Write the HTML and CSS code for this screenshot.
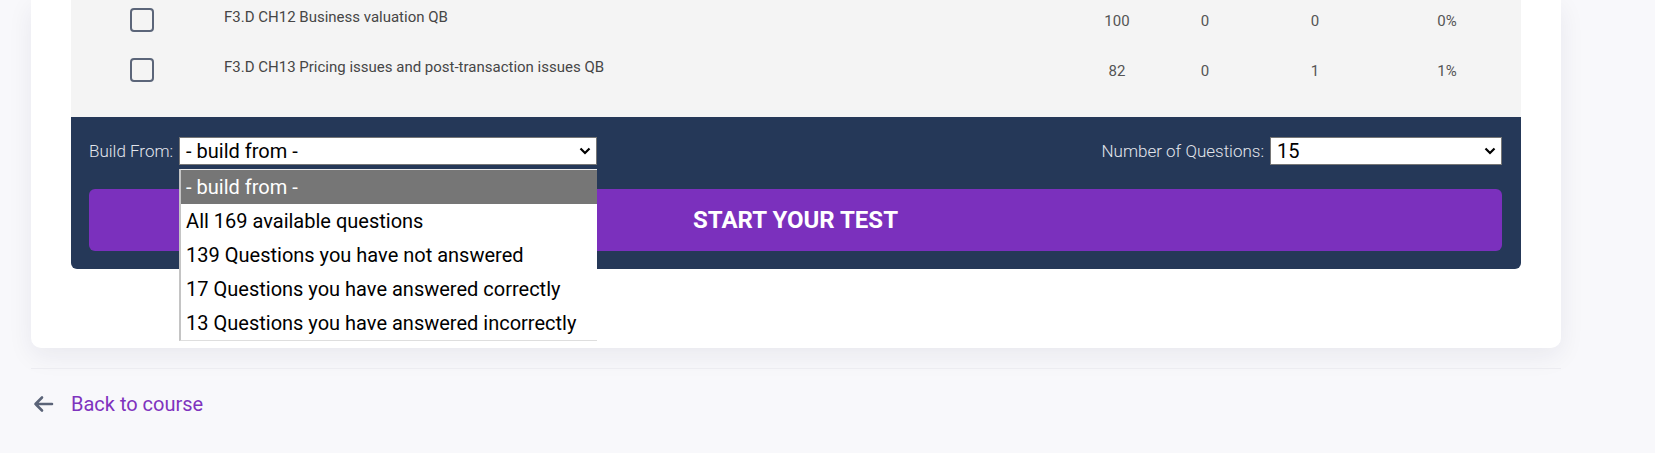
FILE: index.html
```html
<!DOCTYPE html>
<html lang="en">
<head>
<meta charset="utf-8">
<title>Build test</title>
<link rel="stylesheet" href="styles.css">
</head>
<body>
<div class="page">
  <div class="card">
    <div class="qtable">
      <div class="row">
        <span class="cb"></span>
        <span class="title">F3.D CH12 Business valuation QB</span>
        <span class="num">100</span>
        <span class="num">0</span>
        <span class="num">0</span>
        <span class="num">0%</span>
      </div>
      <div class="row">
        <span class="cb"></span>
        <span class="title">F3.D CH13 Pricing issues and post-transaction issues QB</span>
        <span class="num">82</span>
        <span class="num">0</span>
        <span class="num">1</span>
        <span class="num">1%</span>
      </div>
    </div>
    <div class="panel">
      <div class="controls">
        <div class="field">
          <span class="lbl">Build From:</span>
          <div class="select-wrap">
            <div class="select wide">
              <span>- build from -</span>
              <svg class="chev" width="12" height="8" viewBox="0 0 12 8"><path d="M1.5 1.5 L6 6 L10.5 1.5" fill="none" stroke="#000" stroke-width="2.2"/></svg>
            </div>
            <div class="dropdown">
              <div class="opt sel">- build from -</div>
              <div class="opt">All 169 available questions</div>
              <div class="opt">139 Questions you have not answered</div>
              <div class="opt">17 Questions you have answered correctly</div>
              <div class="opt">13 Questions you have answered incorrectly</div>
            </div>
          </div>
        </div>
        <div class="field">
          <span class="lbl">Number of Questions:</span>
          <div class="select-wrap">
            <div class="select narrow">
              <span>15</span>
              <svg class="chev" width="12" height="8" viewBox="0 0 12 8"><path d="M1.5 1.5 L6 6 L10.5 1.5" fill="none" stroke="#000" stroke-width="2.2"/></svg>
            </div>
          </div>
        </div>
      </div>
      <button class="start">START YOUR TEST</button>
    </div>
  </div>
  <div class="divider"></div>
  <a class="back" href="#">
    <svg width="24" height="24" viewBox="0 0 24 24"><path d="M21 12 H4.5 M11 5.5 L4.5 12 L11 18.5" fill="none" stroke="#5b6478" stroke-width="2.6" stroke-linecap="round" stroke-linejoin="round"/></svg>
    <span>Back to course</span>
  </a>
</div>
</body>
</html>
```
FILE: styles.css
```css
* { box-sizing: border-box; }

body {
  margin: 0;
  background: #f8f8fb;
  font-family: Roboto, "Liberation Sans", sans-serif;
}

.page {
  padding-left: 31px;
  width: 1561px;
}

.card {
  width: 1530px;
  background: #fff;
  border-radius: 0 0 10px 10px;
  box-shadow: 0 8px 26px rgba(30, 30, 70, 0.07);
  padding: 0 40px 79px;
}

.qtable {
  background: #f4f4f4;
  padding: 8px 0 9px;
}

.row {
  display: grid;
  grid-template-columns: 153px 846px 94px 82px 138px 126px;
  height: 50px;
  align-items: start;
}

.cb {
  width: 24px;
  height: 24px;
  border: 2px solid #5b6579;
  border-radius: 4px;
  margin-left: 59px;
}

.title {
  font-size: 15px;
  color: #464646;
}

.num {
  font-size: 15px;
  color: #555;
  text-align: center;
  padding-top: 4px;
}

.panel {
  background: #253858;
  border-radius: 0 0 6px 6px;
  padding: 20px 19px 18px 18px;
}

.controls {
  display: flex;
  justify-content: space-between;
  align-items: center;
  height: 28px;
}

.field {
  display: flex;
  align-items: center;
  gap: 6px;
}

.lbl {
  color: #e2e5ec;
  font-weight: 300;
  font-size: 17px;
}

.select-wrap {
  position: relative;
}

.select {
  height: 28px;
  background: #fff;
  border: 1px solid #767676;
  display: flex;
  align-items: center;
  justify-content: space-between;
  padding: 0 5px 0 6px;
  font-size: 20px;
  color: #000;
}

.select.wide { width: 418px; }
.select.narrow { width: 232px; }

.chev { display: block; }

.dropdown {
  position: absolute;
  top: 32px;
  left: 0;
  width: 418px;
  background: #fff;
  border-top: 1px solid #e8e8e8;
  border-left: 2px solid #c4c4c4;
  border-bottom: 1px solid #dedede;
  z-index: 5;
}

.opt {
  height: 34px;
  line-height: 34px;
  padding-left: 5px;
  font-size: 20px;
  color: #000;
  white-space: nowrap;
}

.opt.sel {
  background: #767676;
  color: #fff;
}

.start {
  display: block;
  width: 100%;
  height: 62px;
  margin-top: 24px;
  border: none;
  border-radius: 6px;
  background: #7b30bd;
  color: #fff;
  font-family: Roboto, "Liberation Sans", sans-serif;
  font-weight: 700;
  font-size: 24px;
}

.divider {
  width: 1530px;
  height: 1px;
  margin-top: 20px;
  background: #ececf1;
}

.back {
  display: flex;
  align-items: center;
  gap: 16px;
  height: 24px;
  margin-top: 23px;
  text-decoration: none;
  color: #7f33be;
  font-size: 20px;
}

.back svg { display: block; }
```
